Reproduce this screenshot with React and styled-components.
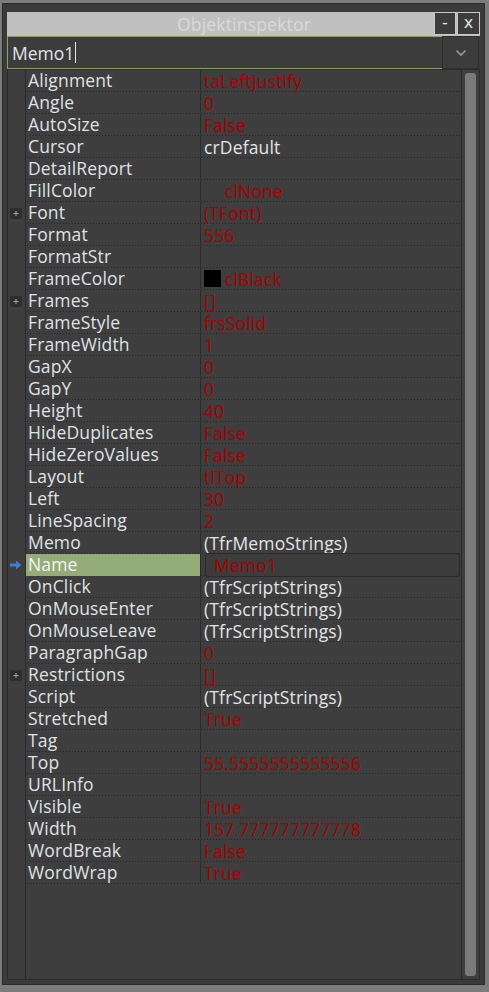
import React from "react";
import styled, { createGlobalStyle } from "styled-components";

const Global = createGlobalStyle`
  html, body { margin: 0; padding: 0; }
  body {
    background: #7c7c7c;
    width: 489px;
    height: 992px;
    overflow: hidden;
    font-family: "Open Sans", "Noto Sans", "DejaVu Sans", sans-serif;
  }
  #root { height: 992px; }
`;

const Window = styled.div`
  box-sizing: border-box;
  margin: 3px 0 0 2px;
  width: 483px;
  height: 982px;
  background: #3b3b3b;
  border: 1px solid #2b2b2b;
  padding: 8px 4px 4px 4px;
  display: flex;
  flex-direction: column;
`;

const TitleBar = styled.div`
  height: 24px;
  background: #c0c0c0;
  display: grid;
  grid-template-columns: 1fr auto 1fr;
  align-items: center;
`;

const TitleText = styled.div`
  grid-column: 2;
  font-size: 17.5px;
  letter-spacing: 0.2px;
  color: #d9d9d9;
  line-height: 24px;
  padding-left: 1px;
`;

const TitleButtons = styled.div`
  grid-column: 3;
  justify-self: end;
  display: flex;
  gap: 1px;
  height: 23px;
  align-self: start;
`;

const TitleButton = styled.div`
  box-sizing: border-box;
  width: ${(p) => p.$w}px;
  height: 23px;
  background: #3c3c3c;
  border: 1px solid #c8c8c8;
  color: #e4e4e4;
  font-size: 16px;
  line-height: 20px;
  text-align: center;
  font-family: "DejaVu Sans", sans-serif;
`;

const Combo = styled.div`
  height: 33px;
  display: flex;
`;

const Edit = styled.div`
  flex: 1;
  box-sizing: border-box;
  background: #3c3c3c;
  border: 1px solid #86a56a;
  border-right: none;
  display: flex;
  align-items: center;
  padding-left: 4px;
  font-size: 17.5px;
  color: #e2e4e8;
`;

const Caret = styled.span`
  display: inline-block;
  width: 1px;
  height: 21px;
  background: #e6e6e6;
  margin-left: 1px;
`;

const DropButton = styled.div`
  box-sizing: border-box;
  width: 37px;
  margin-right: 1px;
  background: #3c3c3c;
  border: 1px solid #2e2e2e;
  display: flex;
  align-items: center;
  justify-content: center;
`;

const Grid = styled.div`
  flex: 1;
  box-sizing: border-box;
  background: #3e3e3e;
  border: 1px solid #2c2c2c;
  display: flex;
`;

const Gutter = styled.div`
  width: 17px;
  border-right: 1px solid #2a2a2a;
  display: flex;
  flex-direction: column;
`;

const Marker = styled.div`
  height: 22px;
  display: flex;
  align-items: center;
  padding-left: 2px;
`;

const Rows = styled.div`
  flex: 1;
  display: flex;
  flex-direction: column;
`;

const Row = styled.div`
  height: 22px;
  display: grid;
  grid-template-columns: 175px 1fr;
  font-size: 17.5px;
  letter-spacing: 0.15px;
  line-height: 20px;
  background: repeating-linear-gradient(90deg, #262626 0 1px, transparent 1px 3px) 1px 100% / 100% 1px no-repeat;
`;

const NameCell = styled.div`
  box-sizing: border-box;
  height: ${(p) => (p.$sel ? 22 : 21)}px;
  padding-left: 2px;
  border-right: 1px solid #2b2b2b;
  color: ${(p) => (p.$sel ? "#f4f4f4" : "#dfe2e6")};
  background: ${(p) => (p.$sel ? "#94ad78" : "transparent")};
  white-space: nowrap;
`;

const ValueCell = styled.div`
  height: 21px;
  padding-left: 3px;
  display: flex;
  align-items: center;
  color: ${(p) => (p.$red ? "#a80000" : "#e2e4e8")};
  white-space: nowrap;
`;

const Swatch = styled.span`
  display: inline-block;
  width: 17px;
  height: 17px;
  margin-right: 4px;
  background: ${(p) => p.$color};
`;

const Editor = styled.div`
  box-sizing: border-box;
  margin: -1px 1px -1px 1px;
  height: 24px;
  flex: 1;
  display: flex;
  align-items: center;
  padding-left: 8px;
  background: #3c3c3c;
  border: 1px solid #2a2a2a;
  border-radius: 3px;
  color: #a80000;
`;

const ScrollTrack = styled.div`
  width: 11px;
  border-left: 1px solid #2a2a2a;
  padding: 3px;
  display: flex;
`;

const Thumb = styled.div`
  flex: 1;
  background: #7a7a7a;
  border-radius: 3px;
`;

const PlusBox = () => (
  <svg width="12" height="11" viewBox="0 0 12 11">
    <rect x="0" y="0" width="12" height="11" rx="2" fill="#2e2e2e" />
    <path d="M3.5 5.5h5M6 3v5" stroke="#a8a8a8" strokeWidth="1" />
  </svg>
);

const Arrow = () => (
  <svg width="12" height="10" viewBox="0 0 12 10">
    <path d="M0 3.5h6V0.5L11.5 5 6 9.5V6.5H0z" fill="#3d7fd6" />
  </svg>
);

const Chevron = () => (
  <svg width="12" height="8" viewBox="0 0 12 8">
    <path d="M1.5 1.5L6 6l4.5-4.5" stroke="#9a9a9a" strokeWidth="1.6" fill="none" />
  </svg>
);

const props = [
  ["Alignment", "taLeftJustify", true],
  ["Angle", "0", true],
  ["AutoSize", "False", true],
  ["Cursor", "crDefault", false],
  ["DetailReport", "", false],
  ["FillColor", "clNone", true, { swatch: "transparent" }],
  ["Font", "(TFont)", true, { plus: true }],
  ["Format", "556", true],
  ["FormatStr", "", false],
  ["FrameColor", "clBlack", true, { swatch: "#000" }],
  ["Frames", "[]", true, { plus: true }],
  ["FrameStyle", "frsSolid", true],
  ["FrameWidth", "1", true],
  ["GapX", "0", true],
  ["GapY", "0", true],
  ["Height", "40", true],
  ["HideDuplicates", "False", true],
  ["HideZeroValues", "False", true],
  ["Layout", "tlTop", true],
  ["Left", "30", true],
  ["LineSpacing", "2", true],
  ["Memo", "(TfrMemoStrings)", false],
  ["Name", "Memo1", true, { selected: true }],
  ["OnClick", "(TfrScriptStrings)", false],
  ["OnMouseEnter", "(TfrScriptStrings)", false],
  ["OnMouseLeave", "(TfrScriptStrings)", false],
  ["ParagraphGap", "0", true],
  ["Restrictions", "[]", true, { plus: true }],
  ["Script", "(TfrScriptStrings)", false],
  ["Stretched", "True", true],
  ["Tag", "", false],
  ["Top", "55.5555555555556", true],
  ["URLInfo", "", false],
  ["Visible", "True", true],
  ["Width", "157.777777777778", true],
  ["WordBreak", "False", true],
  ["WordWrap", "True", true],
];

export default function App() {
  return (
    <>
      <Global />
      <Window>
        <TitleBar>
          <TitleText>Objektinspektor</TitleText>
          <TitleButtons>
            <TitleButton $w={22}>-</TitleButton>
            <TitleButton $w={23}>x</TitleButton>
          </TitleButtons>
        </TitleBar>
        <Combo>
          <Edit>
            Memo1
            <Caret />
          </Edit>
          <DropButton>
            <Chevron />
          </DropButton>
        </Combo>
        <Grid>
          <Gutter>
            {props.map(([name, , , o = {}]) => (
              <Marker key={name}>
                {o.plus ? <PlusBox /> : o.selected ? <Arrow /> : null}
              </Marker>
            ))}
          </Gutter>
          <Rows>
            {props.map(([name, value, red, o = {}]) => (
              <Row key={name}>
                <NameCell $sel={o.selected}>{name}</NameCell>
                {o.selected ? (
                  <ValueCell $red>
                    <Editor>{value}</Editor>
                  </ValueCell>
                ) : (
                  <ValueCell $red={red}>
                    {o.swatch && <Swatch $color={o.swatch} />}
                    {value}
                  </ValueCell>
                )}
              </Row>
            ))}
          </Rows>
          <ScrollTrack>
            <Thumb />
          </ScrollTrack>
        </Grid>
      </Window>
    </>
  );
}
